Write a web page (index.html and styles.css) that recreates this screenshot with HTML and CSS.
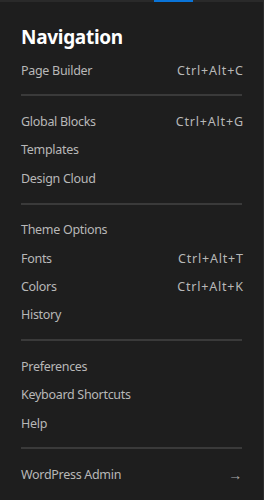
FILE: index.html
```html
<!DOCTYPE html>
<html>
    <head>
        <meta charset="utf-8">
        <title>Navigation</title>
        <link rel="stylesheet" href="styles.css">
    </head>
    <body>
        <div class="top-strip"><span class="tab-mark"></span></div>
        <div class="panel">
            <h2 class="title">Navigation</h2>

            <div class="group">
                <a class="item">Page Builder <span class="keys">Ctrl+Alt+C</span></a>
            </div>
            <hr class="sep">
            <div class="group">
                <a class="item">Global Blocks <span class="keys">Ctrl+Alt+G</span></a>
                <a class="item">Templates</a>
                <a class="item">Design Cloud</a>
            </div>
            <hr class="sep">
            <div class="group">
                <a class="item">Theme Options</a>
                <a class="item">Fonts <span class="keys">Ctrl+Alt+T</span></a>
                <a class="item">Colors <span class="keys">Ctrl+Alt+K</span></a>
                <a class="item">History</a>
            </div>
            <hr class="sep">
            <div class="group">
                <a class="item">Preferences</a>
                <a class="item">Keyboard Shortcuts</a>
                <a class="item">Help</a>
            </div>
            <hr class="sep">
            <div class="group">
                <a class="item">WordPress Admin <span class="arrow">&rarr;</span></a>
            </div>
        </div>
    </body>
</html>
```

FILE: styles.css
```css
html, body {
    height: 100%;
}
body {
    margin: 0;
    background: #1e1e1e;
    font-family: "Noto Sans", "Open Sans", sans-serif;
    border-right: 1px solid #2c2c2c;
    box-sizing: border-box;
}
.top-strip {
    display: flex;
    height: 2px;
    background: #2a2a2a;
}
.tab-mark {
    margin-left: 154px;
    width: 39px;
    height: 2px;
    background: #0a74d8;
}
.panel {
    padding: 0 20px 0 21px;
}
.title {
    margin: 22px 0 6px;
    font-size: 19px;
    font-weight: 700;
    line-height: 26px;
    letter-spacing: -0.3px;
    color: #ffffff;
}
.group {
    display: flex;
    flex-direction: column;
}
.item {
    display: flex;
    justify-content: space-between;
    align-items: center;
    height: 28.4px;
    font-size: 12.5px;
    letter-spacing: -0.3px;
    color: #b8b8b8;
}
.keys {
    letter-spacing: 0.8px;
    margin-right: -0.8px;
}
.arrow {
    font-size: 14px;
    margin-right: 1px;
    color: #a8a8a8;
}
.sep {
    margin: 10px 1px 11px 0;
    border: 0;
    height: 2px;
    background: #3a3a3a;
}
```
